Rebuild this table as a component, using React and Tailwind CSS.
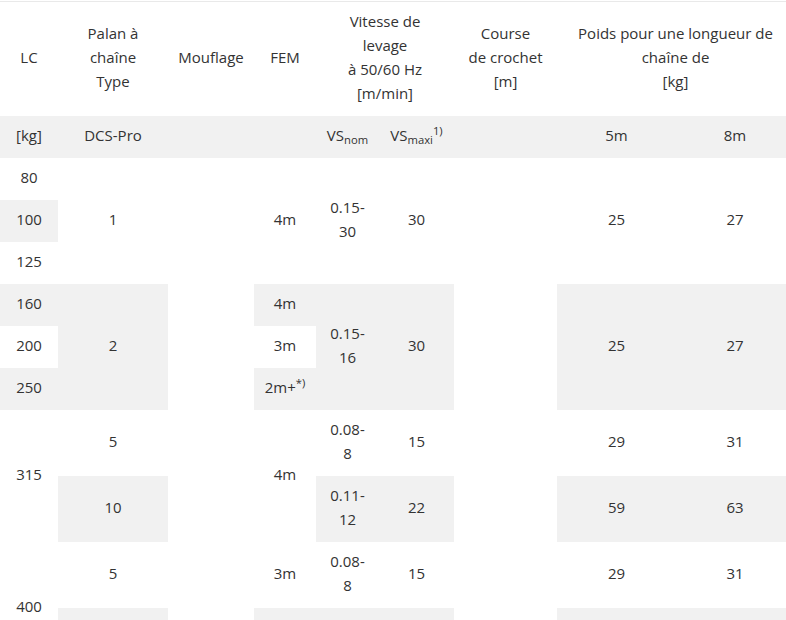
import React from "react";

const G = "bg-[#f1f1f1]";
const cell = "px-2 pt-[7px] pb-[11px] text-center align-middle font-normal";

export default function App() {
  return (
    <div
      className="w-[786px] h-[620px] overflow-hidden bg-white pt-px text-[15px] leading-6 text-[#333]"
      style={{ fontFamily: '"Open Sans", "Noto Sans", sans-serif' }}
    >
      <table className="w-[794px] table-fixed border-collapse border-t border-[#e9e9e9]">
        <colgroup>
          <col className="w-[58px]" />
          <col className="w-[110px]" />
          <col className="w-[86px]" />
          <col className="w-[62px]" />
          <col className="w-[63px]" />
          <col className="w-[75px]" />
          <col className="w-[103px]" />
          <col className="w-[119px]" />
          <col className="w-[118px]" />
        </colgroup>
        <thead>
          <tr>
            <th className={cell}>LC</th>
            <th className={cell}>
              Palan à<br />chaîne<br />Type
            </th>
            <th className={cell}>Mouflage</th>
            <th className={cell}>FEM</th>
            <th className={cell} colSpan={2}>
              Vitesse de<br />levage<br />à 50/60 Hz<br />[m/min]
            </th>
            <th className={cell}>
              Course<br />de crochet<br />[m]
            </th>
            <th className={cell} colSpan={2}>
              Poids pour une longueur de<br />chaîne de<br />[kg]
            </th>
          </tr>
        </thead>
        <tbody>
          {/* unités */}
          <tr className={G}>
            <td className={cell}>[kg]</td>
            <td className={cell}>DCS-Pro</td>
            <td className={cell}></td>
            <td className={cell}></td>
            <td className={cell}>
              VS<sub>nom</sub>
            </td>
            <td className={cell}>
              VS<sub>maxi</sub>
              <sup>1)</sup>
            </td>
            <td className={cell}></td>
            <td className={cell}>5m</td>
            <td className={cell}>8m</td>
          </tr>

          {/* DCS-Pro 1 */}
          <tr>
            <td className={cell}>80</td>
            <td className={cell} rowSpan={3}>1</td>
            <td className={cell} rowSpan={10}></td>
            <td className={cell} rowSpan={3}>4m</td>
            <td className={cell} rowSpan={3}>
              0.15-<br />30
            </td>
            <td className={cell} rowSpan={3}>30</td>
            <td className={cell} rowSpan={10}></td>
            <td className={cell} rowSpan={3}>25</td>
            <td className={cell} rowSpan={3}>27</td>
          </tr>
          <tr>
            <td className={`${cell} ${G}`}>100</td>
          </tr>
          <tr>
            <td className={cell}>125</td>
          </tr>

          {/* DCS-Pro 2 */}
          <tr>
            <td className={`${cell} ${G}`}>160</td>
            <td className={`${cell} ${G}`} rowSpan={3}>2</td>
            <td className={`${cell} ${G}`}>4m</td>
            <td className={`${cell} ${G}`} rowSpan={3}>
              0.15-<br />16
            </td>
            <td className={`${cell} ${G}`} rowSpan={3}>30</td>
            <td className={`${cell} ${G}`} rowSpan={3}>25</td>
            <td className={`${cell} ${G}`} rowSpan={3}>27</td>
          </tr>
          <tr>
            <td className={cell}>200</td>
            <td className={cell}>3m</td>
          </tr>
          <tr>
            <td className={`${cell} ${G}`}>250</td>
            <td className={`${cell} ${G}`}>
              2m+<sup>*)</sup>
            </td>
          </tr>

          {/* 315 kg */}
          <tr>
            <td className={cell} rowSpan={2}>315</td>
            <td className={cell}>5</td>
            <td className={cell} rowSpan={2}>4m</td>
            <td className={cell}>
              0.08-<br />8
            </td>
            <td className={cell}>15</td>
            <td className={cell}>29</td>
            <td className={cell}>31</td>
          </tr>
          <tr>
            <td className={`${cell} ${G}`}>10</td>
            <td className={`${cell} ${G}`}>
              0.11-<br />12
            </td>
            <td className={`${cell} ${G}`}>22</td>
            <td className={`${cell} ${G}`}>59</td>
            <td className={`${cell} ${G}`}>63</td>
          </tr>

          {/* 400 kg */}
          <tr>
            <td className={cell} rowSpan={2}>400</td>
            <td className={cell}>5</td>
            <td className={cell}>3m</td>
            <td className={cell}>
              0.08-<br />8
            </td>
            <td className={cell}>15</td>
            <td className={cell}>29</td>
            <td className={cell}>31</td>
          </tr>
          <tr>
            <td className={`${cell} ${G}`}>10</td>
            <td className={`${cell} ${G}`}>3m</td>
            <td className={`${cell} ${G}`}>
              0.11-<br />12
            </td>
            <td className={`${cell} ${G}`}>22</td>
            <td className={`${cell} ${G}`}>59</td>
            <td className={`${cell} ${G}`}>63</td>
          </tr>
        </tbody>
      </table>
    </div>
  );
}
